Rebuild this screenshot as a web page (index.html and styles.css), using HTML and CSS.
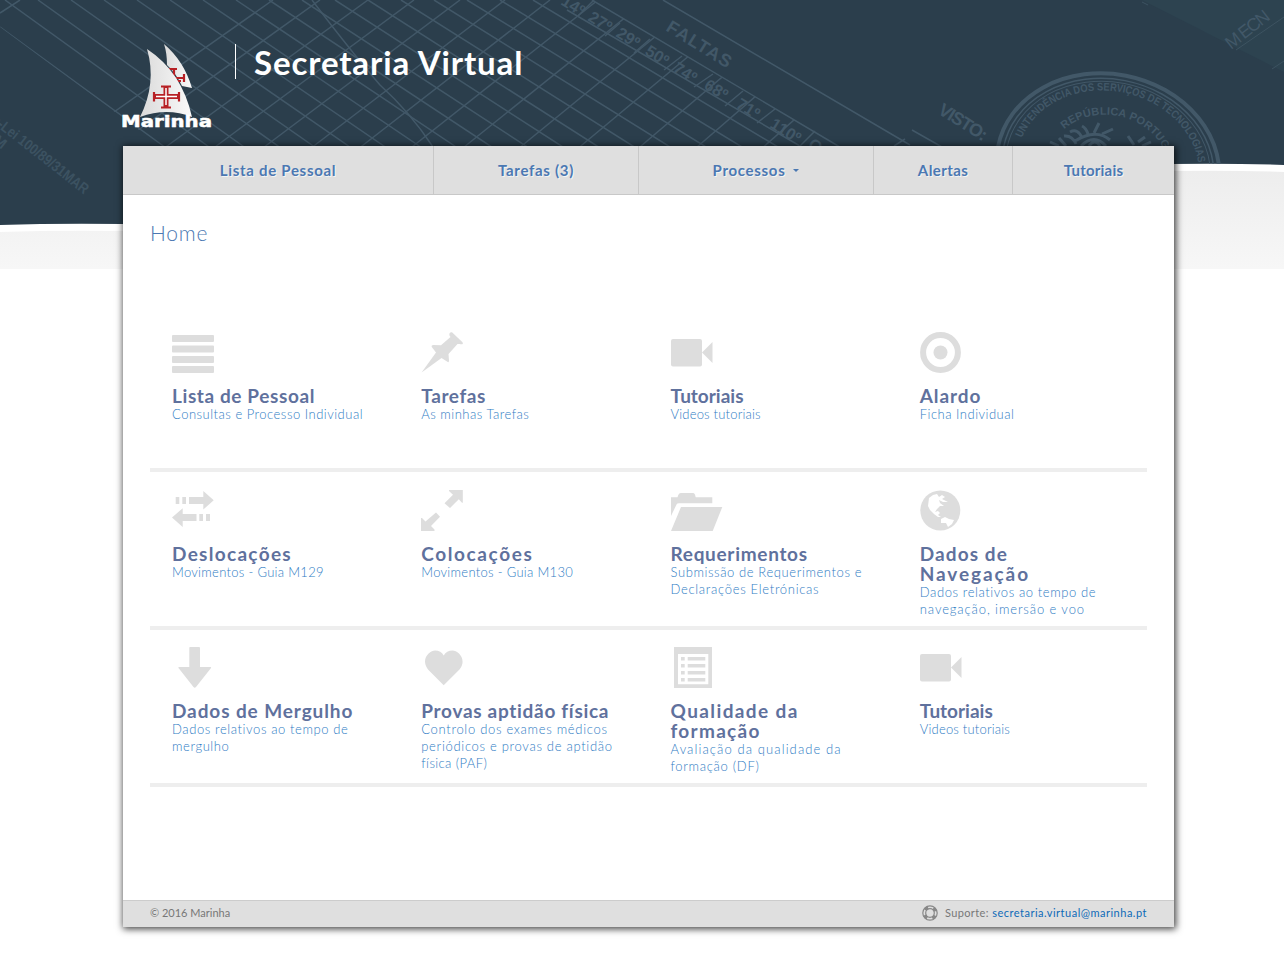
FILE: index.html
```html
<!DOCTYPE html>
<html lang="pt">
<head>
<meta charset="utf-8">
<title>Secretaria Virtual</title>
<link rel="stylesheet" href="styles.css">
</head>
<body>
<svg class="backdrop" width="1284" height="269" viewBox="0 0 1284 269" aria-hidden="true">
  <defs>
    <linearGradient id="fade" x1="0" y1="0" x2="0" y2="1"><stop offset="0" stop-color="#ededed"/><stop offset="1" stop-color="#f7f7f7"/></linearGradient>
    <clipPath id="sky"><path d="M0 0H1284V165Q1230 163 1170 164L123 224Q60 223 0 225Z"/></clipPath>
    <clipPath id="grid"><path d="M0 0H592L850 153H170L0 27Z"/></clipPath>
    <path id="ring-outer" d="M1016.500 168A91.500 77 0 0 1 1199.500 168"/>
    <path id="ring-inner" d="M1047 168A61 53 0 0 1 1169 168"/>
  </defs>
  <path d="M0 232Q60 230 123 231L1170 171Q1230 170 1284 172V269H0Z" fill="url(#fade)"/>
  <g clip-path="url(#sky)">
    <rect width="1284" height="230" fill="#2b3e4c"/>
    <path d="M1142 0L1284 72V0Z" fill="#2d4350"/>
    <g id="lines" class="lines"></g>
    <g class="lines">
      <path d="M312 0Q350 50 380 85Q410 112 433 147M592 0L850 153M567 10L812 153M663 0L910 145M912 130L942 147M0 13L20 0M894 146L905 139"/>
      <path d="M594 0L578 16M620 23L605 36M650 39L634 53M682 56L664 70M713 74L694 87M743 91L725 106M775 109L757 123M815 131L800 146" />
    </g>
    <g class="marks">
      <text transform="translate(560 4) rotate(32)">14º</text>
      <text transform="translate(587 20) rotate(32)">27º</text>
      <text transform="translate(615 36) rotate(32)">29º</text>
      <text transform="translate(644 54) rotate(32)">50º</text>
      <text transform="translate(672 71) rotate(32)">74º</text>
      <text transform="translate(703 88) rotate(32)">68º</text>
      <text transform="translate(735 107) rotate(32)">71º</text>
      <text transform="translate(769 127) rotate(32)">110º</text>
      <text transform="translate(807 147) rotate(32)">O</text>
      <text class="mark-lg" transform="translate(665 30) rotate(32)" textLength="73">FALTAS</text>
      <text class="mark-lg" transform="translate(937 113) rotate(32)" textLength="54">VISTO:</text>
      <text class="mark-thin" transform="translate(1231 50) rotate(-38)" textLength="51">M ECN</text>
      <text class="mark-id" transform="translate(-9 122) rotate(38)" textLength="118" lengthAdjust="spacingAndGlyphs">c-Lei 100/89/31MAR</text>
      <text class="mark-id" transform="translate(-8 142) rotate(38)">M</text>
    </g>
    <path d="M1236 50L1284 17M1272 69L1284 61M1142 2L1148 5" stroke="#3d5361" fill="none"/>
    <g transform="rotate(11 1108 168)">
      <g class="seal">
        <ellipse cx="1108" cy="168" rx="112" ry="94" stroke-width="4"/>
        <ellipse cx="1108" cy="168" rx="106.500" ry="89" stroke-width="1.500"/>
        <ellipse cx="1108" cy="168" rx="103" ry="86" stroke-width="1"/>
      </g>
      <g class="seal-text">
        <text><textPath href="#ring-outer" startOffset="13" textLength="229" lengthAdjust="spacingAndGlyphs">UNTENDÊNCIA DOS SERVIÇOS DE TECNOLOGIAS</textPath></text>
        <text><textPath href="#ring-inner" startOffset="32" textLength="124">REPÚBLICA PORTUGU</textPath></text>
      </g>
    </g>
    <g class="seal">
      <path stroke-width="3" d="M1059 146L1050 142M1066 146L1059 138M1076 144Q1072 135 1064 136M1082 138Q1078 128 1070 132M1088 134Q1086 128 1082 126M1094 133L1099 123M1102 134L1113 129M1075 141Q1096 128 1110 140M1081 146Q1094 133 1106 146M1089 146Q1095 138 1100 146M1128 136L1134 145M1138 142L1145 137M1142 146L1151 142"/>
    </g>
  </g>
</svg>

<header class="masthead">
  <svg class="logo" width="92" height="88" viewBox="0 0 92 88" role="img" aria-label="Marinha">
    <defs><linearGradient id="sail" x1="0" y1="0" x2="1" y2="0"><stop offset="0" stop-color="#dadada"/><stop offset="1" stop-color="#fafafa"/></linearGradient></defs>
    <path d="M42 1Q62 18 70 45L60 43Q54 30 45 22Q45 10 42 1Z" fill="url(#sail)"/>
    <path d="M47 26H55M52 26V35H62M62 31V39M55 38H59" stroke="#b72025" stroke-width="2.200" fill="none"/>
    <path d="M25 6Q60 29 70 74Q45 64 18 74Q35 40 25 6Z" fill="url(#sail)"/>
    <path d="M44 43V64M32 53.500H57" stroke="#b72025" stroke-width="5" fill="none"/>
    <path d="M39 43.500H49M39 64.500H49M32 49V58.500M57 49V58.500" stroke="#b72025" stroke-width="2.200"/>
    <path d="M44 45V62M34 53.500H55" stroke="#fff" stroke-width="1.500"/>
    <text class="logo-name" x="-1" y="84" textLength="91" lengthAdjust="spacingAndGlyphs">Marinha</text>
  </svg>
  <h1 class="site-title">Secretaria Virtual</h1>
</header>

<div class="page">
  <nav class="menu">
    <a class="s7">Lista de Pessoal</a>
    <a class="s7">Tarefas (3)</a>
    <a class="s7">Processos <i class="caret"></i></a>
    <a class="s4">Alertas</a>
    <a class="s2">Tutoriais</a>
  </nav>
  <main class="content">
    <h2 class="crumb">Home</h2>
    <div class="row">
      <a class="tile"><svg class="icon" viewBox="0 0 52 42"><path d="M1 4H41Q42 4 42 5V10Q42 11 41 11H1Q0 11 0 10V5Q0 4 1 4ZM1 14.500H41Q42 14.500 42 15.500V20.500Q42 21.500 41 21.500H1Q0 21.500 0 20.500V15.500Q0 14.500 1 14.500ZM1 25H41Q42 25 42 26V31Q42 32 41 32H1Q0 32 0 31V26Q0 25 1 25ZM1 35H41Q42 35 42 36V41Q42 42 41 42H1Q0 42 0 41V36Q0 35 1 35Z"/></svg><b class="s6">Lista de Pessoal</b><span class="s5">Consultas e Processo Individual</span></a>
      <a class="tile"><svg class="icon" viewBox="0 0 52 42"><path d="M.6 41.500L15 21.500 10.800 16Q10 14.200 12.500 14L20 14.300 29.500 6 28.400 4.200Q28 .8 31 1.200L41.500 11.200Q43 14 38.500 13L36.500 13 27.500 23 28 29.500Q28 32.500 26 30.500L20.500 27Z"/></svg><b class="s6">Tarefas</b><span class="s5">As minhas Tarefas</span></a>
      <a class="tile"><svg class="icon" viewBox="0 0 52 42"><rect y="8" width="31" height="27.500" rx="2"/><path d="M31 21.500L41.500 11V32Z"/></svg><b>Tutoriais</b><span class="s2">Videos tutoriais</span></a>
      <a class="tile"><svg class="icon" viewBox="0 0 52 42"><circle cx="20.500" cy="21.500" r="17.400" fill="none" stroke="#ddd" stroke-width="6"/><circle cx="20.500" cy="21.500" r="7"/></svg><b class="s9">Alardo</b><span class="s5">Ficha Individual</span></a>
    </div>
    <div class="row">
      <a class="tile"><svg class="icon" viewBox="0 0 52 42"><path d="M3.700 8H7.300V15H3.700ZM10.300 8H14V15H10.300ZM17 8H31.300V2L41.700 11.300 31.300 20.500V15H17ZM0 28.500L10.700 19.300V25H24.500V32H10.700V38ZM27.300 25H31V32H27.300ZM34 25H38V32H34Z"/></svg><b class="s13">Deslocações</b><span class="s3">Movimentos - Guia M129</span></a>
      <a class="tile"><svg class="icon" viewBox="0 0 52 42"><path d="M28 1H41.800V13.700H41L37.800 10.300 29 19 23.500 14.200 32 5.700 28 2ZM15 23.500L19 27.700 10 37 13.500 40.500V42H0V29H1L4.500 32.500Z"/></svg><b class="s16">Colocações</b><span class="s3">Movimentos - Guia M130</span></a>
      <a class="tile"><svg class="icon" viewBox="0 0 52 42"><path d="M0 27V8.300H6.500Q7.500 4 10 4H22Q24 4 24.700 8.300H41.300V14.300H8Q6 14.300 5.500 15.500ZM10 18H51.300L41.700 42H0Z"/></svg><b class="s7">Requerimentos</b><span class="s6">Submissão de Requerimentos e</span><span class="s7">Declarações Eletrónicas</span></a>
      <a class="tile"><svg class="icon" viewBox="0 0 52 42"><circle cx="20.300" cy="21.500" r="20"/><path class="land" d="M9 9L13 6 17 5 19 8 22 6 25 8 22 10 28 13 23 13 19 11 20 14 24 17 20 17 17 20 15 23 18 22 20 24 18 26 21 28 18 28 14 25 10 21 8 17ZM21 30L25 28 29 30 34 31 32 35 28 38 26 34 21 34Z"/></svg><b class="s11">Dados de</b><b class="s19">Navegação</b><span class="s6">Dados relativos ao tempo de</span><span class="s9">navegação, imersão e voo</span></a>
    </div>
    <div class="row row-last">
      <a class="tile"><svg class="icon" viewBox="0 0 52 42"><path d="M18 0H27Q28 0 28 1V20H38.500Q39.500 20 39 21L24 40Q22.700 41.300 21.500 40L6.500 21Q6 20 7 20H17.300V1Q17.300 0 18 0Z"/></svg><b class="s9">Dados de Mergulho</b><span class="s6">Dados relativos ao tempo de</span><span class="s6">mergulho</span></a>
      <a class="tile"><svg class="icon" viewBox="0 0 52 42"><path d="M22.700 38.300L7 22.500C-1 12 9 3.500 14 3.500Q20 3.500 22.700 8.500 25.500 3.500 31.500 3.500C37 3.500 46.500 12 38.500 22.500Z"/></svg><b class="s7">Provas aptidão física</b><span class="s7">Controlo dos exames médicos</span><span class="s7">periódicos e provas de aptidão</span><span class="s4">física (PAF)</span></a>
      <a class="tile"><svg class="icon" viewBox="0 0 52 42"><path fill-rule="evenodd" d="M3 0H41V41H3ZM7 7V37.300H37.300V7Z"/><path d="M10 10H13.700V13.500H10ZM16.700 10H34.300V13.500H16.700ZM10 17H13.700V20.500H10ZM16.700 17H34.300V20.500H16.700ZM10 24H13.700V27.500H10ZM16.700 24H34.300V27.500H16.700ZM10 31H13.700V34.500H10ZM16.700 31H34.300V34.500H16.700Z"/></svg><b class="s14">Qualidade da</b><b class="s13">formação</b><span class="s11">Avaliação da qualidade da</span><span class="s7">formação (DF)</span></a>
      <a class="tile"><svg class="icon" viewBox="0 0 52 42"><rect y="7" width="31" height="27.500" rx="2"/><path d="M31 20.500L41.500 10V31Z"/></svg><b>Tutoriais</b><span class="s2">Videos tutoriais</span></a>
    </div>
  </main>
  <footer class="foot">
    <span>© 2016 Marinha</span>
    <span class="support">
      <svg width="16" height="16" viewBox="0 0 16 16"><g fill="none" stroke="#888"><circle cx="8" cy="8" r="7.200" stroke-width="1.200"/><circle cx="8" cy="8" r="4.300" stroke-width="1.200"/><circle cx="8" cy="8" r="5.700" stroke-width="3.400" stroke-dasharray="3.600 5.353" stroke-dashoffset="-2.680"/></g></svg>
      <span class="s4">Suporte: <a class="s5">secretaria.virtual@marinha.pt</a></span>
    </span>
  </footer>
</div>
<script src="grid.js"></script>
</body>
</html>
```
FILE: styles.css
```css
body {
  margin: 0;
  min-height: 953px;
  position: relative;
  background: #fff;
  font-family: Lato, "Open Sans", sans-serif;
  font-variant-ligatures: none;
  overflow: hidden;
}
.backdrop { position: absolute; left: 0; top: 0; z-index: -1; }
.lines path { fill: none; stroke: #425868; stroke-width: 1.5; }
.marks text { font: bold 16.5px "Liberation Sans", sans-serif; fill: #425868; }
.marks .mark-lg { font-size: 18px; }
.marks .mark-thin { font-weight: 400; font-size: 18px; }
.marks .mark-id { font-size: 15px; fill: #3c5261; }
.seal ellipse, .seal path { fill: none; stroke: #425868; }
.seal-text text { font: bold 11px "Liberation Sans", sans-serif; fill: #425868; }

/* Tracking steps, in tenths of a pixel */
.s2 { letter-spacing: .2px; }
.s3 { letter-spacing: .3px; }
.s4 { letter-spacing: .4px; }
.s5 { letter-spacing: .5px; }
.s6 { letter-spacing: .6px; }
.s7 { letter-spacing: .7px; }
.s9 { letter-spacing: .9px; }
.s11 { letter-spacing: 1.1px; }
.s13 { letter-spacing: 1.3px; }
.s14 { letter-spacing: 1.4px; }
.s16 { letter-spacing: 1.6px; }
.s19 { letter-spacing: 1.9px; }

.masthead { height: 146px; padding-left: 122px; display: flex; align-items: flex-start; }
.logo { margin-top: 43px; }
.logo-name { font: bold 16px "DejaVu Sans", sans-serif; fill: #fff; stroke: #fff; stroke-width: .5px; }
.site-title {
  margin: 44px 0 0 21px;
  padding-left: 18px;
  border-left: 1px solid #fff;
  height: 35px;
  line-height: 37px;
  font-size: 33px;
  font-weight: 700;
  letter-spacing: .87px;
  color: #fff;
  white-space: nowrap;
}

.page {
  width: 1051px;
  height: 781px;
  margin-left: 123px;
  background: #fff;
  box-shadow: 1px 1px 7px 1px rgba(0, 0, 0, .75);
  display: flex;
  flex-direction: column;
}
.menu {
  display: grid;
  grid-template-columns: 311px 205px 235px 139px 161px;
  height: 48px;
  background: #dfdfdf;
  border-bottom: 1px solid #c8c8c8;
}
.menu a {
  display: flex;
  align-items: center;
  justify-content: center;
  border-right: 1px solid #c8c8c8;
  font-size: 15px;
  font-weight: 700;
  color: #4b78b2;
  text-shadow: 1px 1px 0 #f4f4f4;
}
.menu a:last-child { border-right: 0; }
.caret { margin-left: 8px; border: 3px solid transparent; border-top-color: #4b78b2; border-bottom: 0; }

.content { flex: 1; padding: 0 27px; }
.crumb { margin: 23px 0 66px; font-size: 21px; line-height: 30px; font-weight: 300; letter-spacing: .8px; color: #4b78b2; }
.row {
  display: grid;
  grid-template-columns: repeat(4, 1fr);
  height: 154px;
  border-bottom: 4px solid #eee;
}
.row-last { height: 153px; }
.tile { padding: 17px 0 0 22px; white-space: nowrap; }
.icon { display: block; width: 52px; height: 42px; margin-bottom: 13px; fill: #ddd; }
.row-last .icon { margin-bottom: 12px; }
.land { fill: #fff; }
.tile b { display: block; font-size: 19px; line-height: 20px; color: #5f719d; }
.tile span { display: block; font-size: 13px; font-weight: 300; line-height: 17px; color: #2f7cc4; }

.foot {
  height: 26px;
  box-sizing: border-box;
  padding: 0 27px 3px;
  border-top: 1px solid #ccc;
  background: #dfdfdf;
  display: flex;
  flex: 0 0 27px;
  align-items: center;
  justify-content: space-between;
  font-size: 11px;
  color: #777;
}
.support { display: flex; align-items: center; gap: 7px; }
.support a { color: #0d6ab8; }
```
FILE: grid.js
```js
const svgNs = "http://www.w3.org/2000/svg";
const lines = document.getElementById("lines");
lines.setAttribute("clip-path", "url(#grid)");

function addLine(x1, y1, x2, y2) {
  const path = document.createElementNS(svgNs, "path");
  path.setAttribute("d", `M${x1} ${y1}L${x2} ${y2}`);
  lines.appendChild(path);
}

// Falling lines flatten slightly from left to right.
for (let i = 0; i < 17; i++) {
  const slope = 0.72 - i * 0.0075;
  addLine(5 + i * 33, 0, 5 + i * 33 + 153 / slope, 153);
}
addLine(0, 27, 173, 153);

// Rising lines steepen slightly from left to right.
const tops = [273, 320, 368, 414, 460, 505, 550, 598, 647, 700, 756, 813, 867, 930];
tops.forEach((top, i) => addLine(top, 0, top - 213 + i * 3.3, 150));
```
